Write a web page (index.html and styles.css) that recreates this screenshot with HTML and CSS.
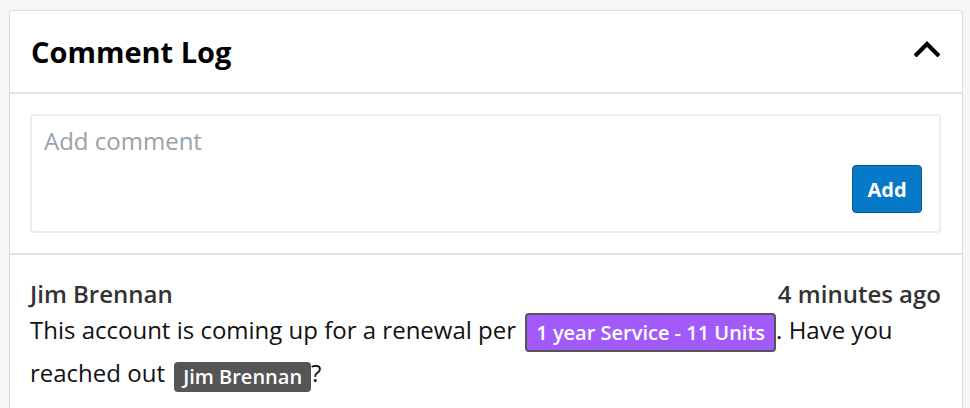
FILE: index.html
```html
<!DOCTYPE html>
<html lang="en">
<head>
    <meta charset="UTF-8">
    <meta name="viewport" content="width=device-width, initial-scale=1.0">
    <title>Comment Log</title>
    <link rel="stylesheet" href="styles.css">
</head>
<body>
    <div class="panel">
        <div class="panel-header">
            <h2>Comment Log</h2>
            <svg class="chevron" width="26" height="16" viewBox="0 0 26 16">
                <path d="M2.5 13.5 L13 3 L23.5 13.5" fill="none" stroke="#000" stroke-width="4.2" stroke-linecap="square"/>
            </svg>
        </div>

        <div class="comment-form">
            <div class="comment-box">
                <textarea placeholder="Add comment"></textarea>
                <button type="button" class="add-btn">Add</button>
            </div>
        </div>

        <div class="comment">
            <div class="comment-meta">
                <span class="author">Jim Brennan</span>
                <span class="time">4 minutes ago</span>
            </div>
            <p class="comment-text">This account is coming up for a renewal per <span class="tag tag-record">1 year Service - 11 Units</span>. Have you reached out <span class="tag tag-user">Jim Brennan</span>?</p>
        </div>
    </div>
</body>
</html>
```

FILE: styles.css
```css
/* general */
* {
    box-sizing: border-box;
}

body {
    font-family: "Open Sans", "Liberation Sans", sans-serif;
    background-color: #f5f6f8;
    color: #111;
    margin: 0;
    padding: 10px 7px 0 9px;
    overflow: hidden;
}

.panel {
    background: white;
    border: 1px solid #dcdcdc;
    border-bottom: none;
    border-radius: 4px 4px 0 0;
    height: 398px;
}

/* header */
.panel-header {
    display: flex;
    align-items: center;
    justify-content: space-between;
    height: 83px;
    padding: 0 22px 0 21px;
    border-bottom: 2px solid #e2e2e2;
}

.panel-header h2 {
    margin: 0;
    font-size: 29px;
    font-weight: 700;
    color: #000;
}

.chevron {
    display: block;
    margin-top: -6px;
}

/* new comment */
.comment-form {
    padding: 20px 21px 20px 20px;
    border-bottom: 2px solid #e2e2e2;
}

.comment-box {
    display: flex;
    flex-direction: column;
    height: 119px;
    border: 2px solid #ececec;
    border-radius: 4px;
    padding: 0 17px 18px 12px;
}

.comment-box textarea {
    flex: 1;
    min-height: 0;
    border: none;
    outline: none;
    resize: none;
    padding: 8px 0 0 0;
    font-family: inherit;
    font-size: 24px;
    color: #333;
}

.comment-box textarea::placeholder {
    color: #98a2aa;
}

.add-btn {
    flex: none;
    align-self: flex-end;
    width: 70px;
    height: 48px;
    background-color: #0679c9;
    border: 1px solid #0b5892;
    border-radius: 4px;
    color: white;
    font-family: inherit;
    font-size: 20px;
    font-weight: 700;
    cursor: pointer;
}

/* comment entries */
.comment {
    padding: 24px 21px 0 20px;
}

.comment-meta {
    display: flex;
    justify-content: space-between;
    height: 30px;
    line-height: 30px;
    font-size: 24px;
    font-weight: 600;
    color: #333;
}

.comment-text {
    margin: 0;
    font-size: 24px;
    line-height: 41px;
}

.tag {
    display: inline-block;
    color: white;
    font-weight: 600;
    font-size: 20px;
    border-radius: 4px;
    padding: 0 9px;
    margin-left: 3px;
    vertical-align: middle;
}

.tag-record {
    background-color: #a25bfa;
    border: 2px solid #555;
    line-height: 35px;
}

.tag-user {
    background-color: #555;
    line-height: 30px;
    margin-top: 2px;
}
```
